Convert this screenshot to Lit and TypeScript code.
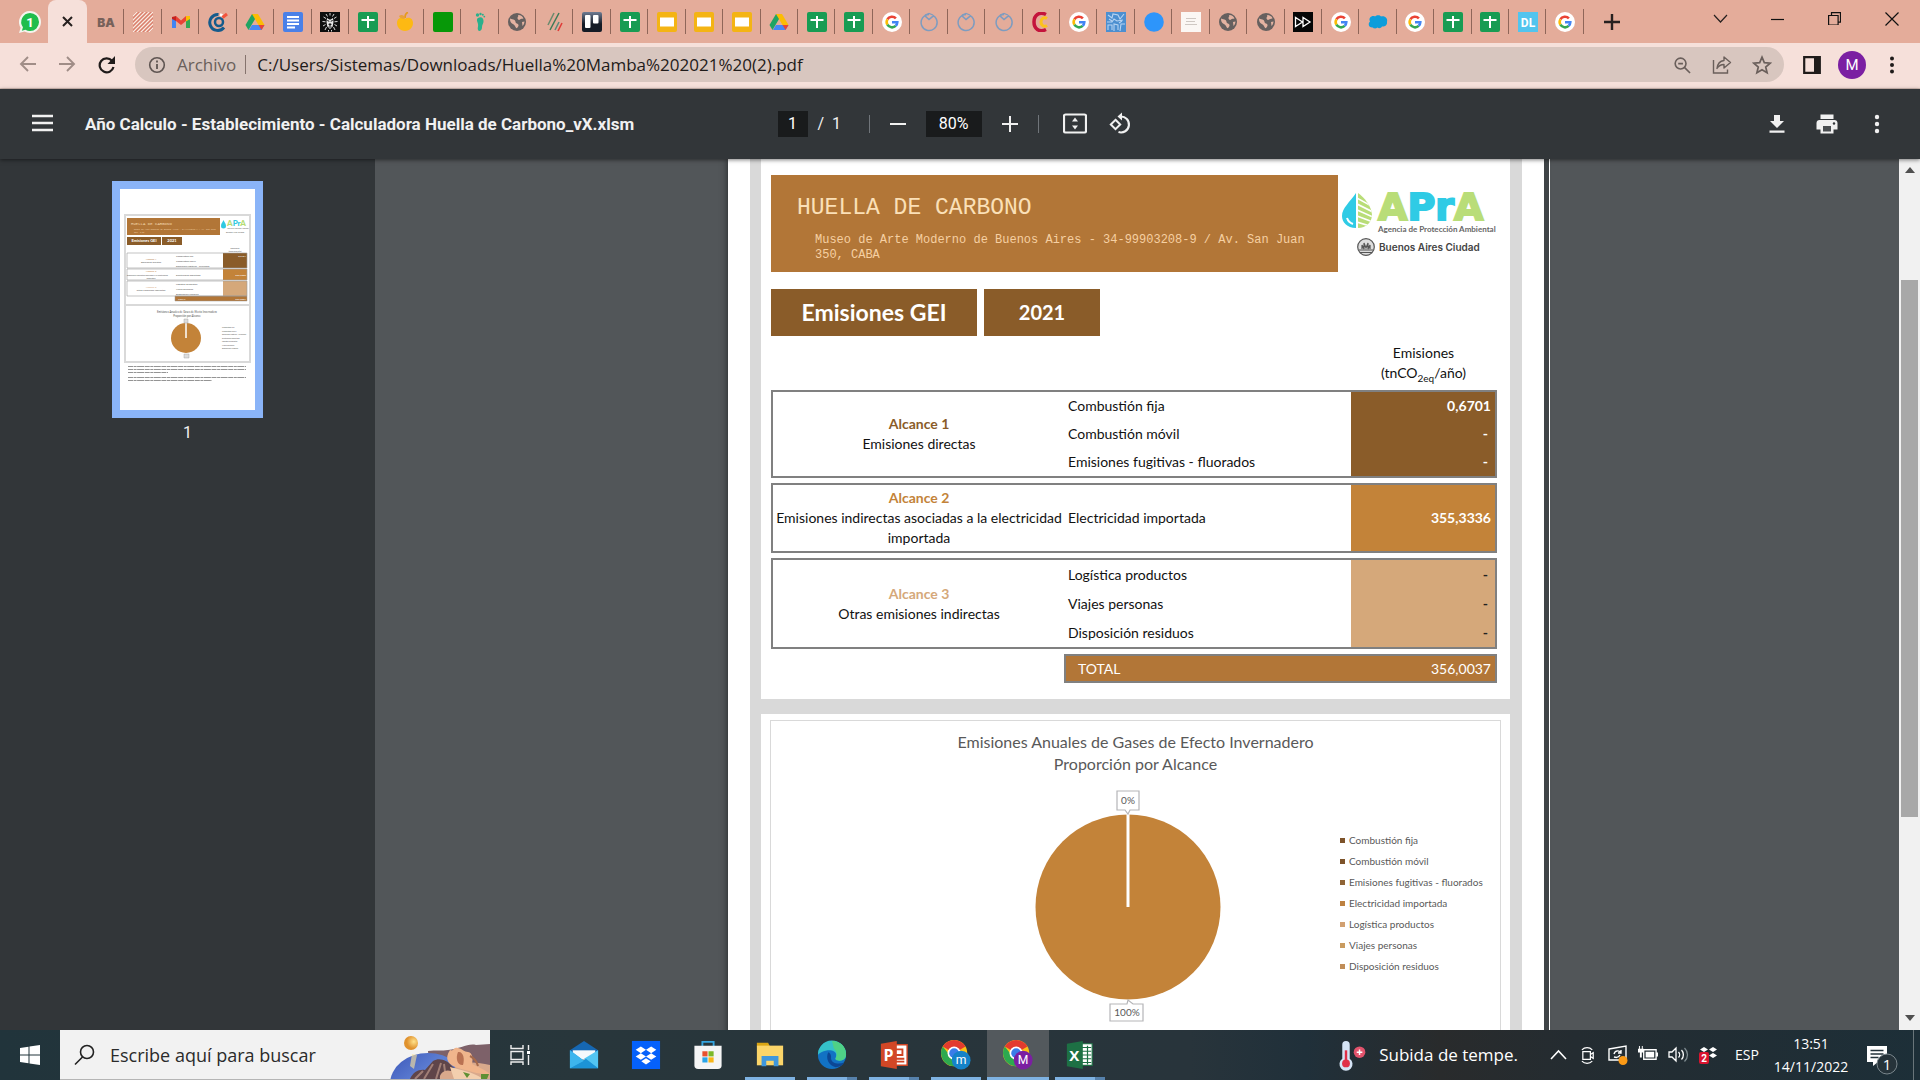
import { LitElement, html, svg, css, type TemplateResult } from "lit";
import { customElement } from "lit/decorators.js";
import { classMap } from "lit/directives/class-map.js";

/* ---------- Site icons, drawn on a 20 x 20 grid ---------- */

const sheets = svg`<rect width="20" height="20" rx="2" fill="#189c53"/><path d="M10 4v12M3.500 8h13" stroke="#fff" stroke-width="2" fill="none"/>`;
const slides = svg`<rect width="20" height="20" rx="2" fill="#f4b414"/><rect x="3" y="5.500" width="14" height="9" fill="#fff"/>`;
const drive = svg`<path d="M7 2h6l-6.500 11L3.500 18 .500 13z" fill="#1fa463"/><path d="M7 2h6l6.500 11h-6z" fill="#fbbc04"/><path d="M4 18l3-5h12.500l-3 5z" fill="#4688f4"/><path d="M13.500 13h6l-3 5z" fill="#ea4335"/>`;
const google = svg`<circle cx="10" cy="10" r="10" fill="#fff"/><g fill="none" stroke-width="2.600"><path d="M13.900 6.400A5.400 5.400 0 0 0 5.400 7.300" stroke="#ea4335"/><path d="M5.400 7.300a5.400 5.400 0 0 0 0 5.400" stroke="#fbbc05"/><path d="M5.400 12.700a5.400 5.400 0 0 0 8.300 1.200" stroke="#34a853"/><path d="M13.700 13.900A5.200 5.200 0 0 0 15.300 10.300H10" stroke="#4285f4"/></g>`;
const globe = svg`<circle cx="10" cy="10" r="9" fill="#66605f"/><path d="M3 6.500c2 1 3 .500 4.500 1.500S8 11 10 11.500s2 2.500.500 4c-1 1.300-1.500.500-2-.500-.600-1.700-1.500-2.500-3.500-3.500-1.200-.700-2-2-2-5zM11 3c2-.500 5 1.500 5.500 3.500-1.500.500-2.500 0-3.500 1s-2.500 0-2.500-1.500S12 4.500 11 3zM15 10l2.500-.500c-.200 2-1 3.500-2 4.500z" fill="#e4b3a2"/>`;
const bulb = svg`<path d="M10 2.500a8 8 0 1 0 4.500 1.300L10 7.500 5.700 3.600" fill="none" stroke="#7d9cc0" stroke-width="1.500"/><path d="M6 3l4-1.500L14 3" fill="none" stroke="#7d9cc0" stroke-width="1.300"/>`;

const favicons: Record<string, TemplateResult<2>> = {
  sheets, slides, drive, google, globe, bulb,
  gba: svg`<text x="10" y="15" text-anchor="middle" font-family="Inter, sans-serif" font-weight="900" font-size="12" fill="#77615a">BA</text>`,
  hatch: svg`<path d="M0 4l4-4M0 8l8-8M0 12L12 0M0 16L16 0M0 20L20 0M4 20L20 4M8 20L20 8M12 20l8-8M16 20l4-4" stroke="#fbe9e2" stroke-width="1"/><path d="M0 6l6-6M0 10L10 0M0 14L14 0M0 18L18 0M2 20L20 2M6 20L20 6M10 20l10-10M14 20l6-6" stroke="#d9705f" stroke-width=".8"/>`,
  gmail: svg`<path d="M1 5v11h4V8z" fill="#4285f4"/><path d="M15 8v8h4V5z" fill="#34a853"/><path d="M1 5l4-1v5L1 7z" fill="#c5221f"/><path d="M5 4l5 4.500L15 4v5l-5 4-5-4z" fill="#ea4335"/><path d="M15 4l4 0v3l-4 2.500z" fill="#fbbc04"/>`,
  compass: svg`<path d="M16 15.500A8 8 0 1 1 10.500 2.500" fill="none" stroke="#155b8c" stroke-width="3"/><circle cx="11" cy="10" r="4" fill="none" stroke="#155b8c" stroke-width="2.500"/><path d="M12 2.500l2.500 1" stroke="#fff" stroke-width="2.500"/><path d="M14.500 5.500L19 2" stroke="#f2543d" stroke-width="3"/>`,
  docs: svg`<rect width="20" height="20" rx="2" fill="#4a80e8"/><path d="M4 5h12M4 8.500h12M4 12h12M4 15.500h8" stroke="#fff" stroke-width="1.800"/>`,
  lion: svg`<rect width="20" height="20" fill="#0e0e0e"/><path d="M6 2l1.500 2.500M14 2l-1.500 2.500M10 1v2.500M3.500 5L6 6.500M16.500 5L14 6.500M2.500 9.500l3 .3M17.500 9.500l-3 .3M3 14l2.500-1.500M17 14l-2.500-1.500M5 18l1.500-3M15 18l-1.500-3M8.500 19.500V18M11.500 19.500V18" stroke="#eee" stroke-width=".9"/><path d="M7 6l2.300 1.500h1.400L13 6l.5 4-.8 4.500L10 17l-2.700-2.500L6.500 10z" fill="#e8e8e8"/><path d="M7.300 8.500l2 .8M12.700 8.500l-2 .8M8.800 12h2.400L10 13.600zM8.500 15h3" stroke="#0e0e0e" stroke-width="1" fill="#0e0e0e"/>`,
  apple: svg`<path d="M10 7c3-2.500 8-1 8 4 0 4-3 8-8 8s-8-4-8-8c0-5 5-6.500 8-4z" fill="#fdb913"/><path d="M10 6c0-3 1-5 3-5.500" stroke="#e79a1a" stroke-width="1.800" fill="none"/><path d="M4 4c3-2.500 6 0 6 2.500C7 7 5 6.500 4 4z" fill="#e8a23a"/>`,
  green: svg`<rect width="20" height="20" rx="2" fill="#079808"/>`,
  foot: svg`<path d="M8 6c3-2 6 0 5.500 4-.300 2-1.500 3-1.500 5.500 0 3-3 4.500-4 2.500-.800-2 .500-3.500 0-6S6 7.500 8 6z" fill="#2ab08c"/><g fill="#2ab08c"><circle cx="7.500" cy="3" r="1.700"/><circle cx="10.500" cy="2" r="1.200"/><circle cx="12.800" cy="2.800" r="1"/><circle cx="14.300" cy="4.600" r=".9"/></g>`,
  lines: svg`<path d="M3 13l6-12" stroke="#6a8a6e" stroke-width="1.500"/><path d="M5 18L14 1" stroke="#3f7a58" stroke-width="1.500"/><path d="M10 18l4-8" stroke="#5a8a7a" stroke-width="1.500"/><path d="M13 19l4-8" stroke="#e03a36" stroke-width="1.500"/>`,
  trello: svg`<defs><linearGradient id="tr" x1="0" y1="0" x2="0" y2="1"><stop offset="0" stop-color="#6f7c93"/><stop offset=".6" stop-color="#151b26"/></linearGradient></defs><rect width="20" height="20" rx="2" fill="url(#tr)"/><rect x="3" y="3" width="5.500" height="13" rx="1" fill="#fff"/><rect x="11" y="3" width="5.500" height="8.500" rx="1" fill="#fff"/>`,
  cee: svg`<path d="M15 2.500C8-1 3 3.500 3 10s5 11 12 7.500" fill="none" stroke="#c4143c" stroke-width="3.500"/><path d="M16 6.500c-3-2-6 0-6 3.500s3 5.500 6 3.500" fill="none" stroke="#fcc21b" stroke-width="3"/>`,
  scribble: svg`<rect width="20" height="20" fill="#4c8fd0"/><path d="M2 3l4 3 1-4 5 1 2 4 4-5M1 10h5l2-3 3 2 6-1M2 18v-5h4v5M8 19v-7l4 1v5M14 19l1-7h4M3 7l3 2M13 11l3-2" stroke="#b7d4f2" stroke-width="1.100" fill="none"/>`,
  dot: svg`<circle cx="10" cy="10" r="9.800" fill="#2d95fb"/>`,
  note: svg`<rect width="20" height="20" fill="#fbf7f4"/><path d="M5 6.500h10M5 9.500h9M4 12.500h12" stroke="#cfc8c3" stroke-width="1"/>`,
  forward: svg`<rect width="20" height="20" fill="#060606"/><path d="M2.500 5.500v9l7-4.500zM10 5.500v9l7-4.500z" fill="none" stroke="#fff" stroke-width="1.300"/>`,
  cloud: svg`<path d="M5 15.500C0 16 0 11 2 9.500 0 6 4 3 7 4.500c2-2 5-1.500 6 0 4-1 7 2 6 5.500.500 3.500-3 5-5 4.500-1 2-3.500 2-4.500 1-2 1.500-4 1-4.500 0z" fill="#0d9ddb"/>`,
  dl: svg`<rect width="20" height="20" fill="#52c4ee"/><text x="10" y="14.500" text-anchor="middle" font-family="Roboto, sans-serif" font-weight="700" font-size="12" fill="#fff">DL</text>`,
};

interface Tab { title: string; icon: string }

const tab = (title: string, icon: string): Tab => ({ title, icon });

const tabs: Tab[] = [
  tab("Buenos Aires", "gba"), tab("Sitio", "hatch"), tab("Gmail", "gmail"), tab("Calculadora", "compass"),
  tab("Drive", "drive"), tab("Documento", "docs"), tab("Museo", "lion"), tab("Planilla", "sheets"),
  tab("Manzana", "apple"), tab("Verde", "green"), tab("Huella", "foot"), tab("Web", "globe"),
  tab("Líneas", "lines"), tab("Trello", "trello"), tab("Planilla", "sheets"), tab("Presentación", "slides"),
  tab("Presentación", "slides"), tab("Presentación", "slides"), tab("Drive", "drive"), tab("Planilla", "sheets"),
  tab("Planilla", "sheets"), tab("Google", "google"), tab("Energía", "bulb"), tab("Energía", "bulb"),
  tab("Energía", "bulb"), tab("Cultura", "cee"), tab("Google", "google"), tab("Plano", "scribble"),
  tab("Punto", "dot"), tab("Nota", "note"), tab("Web", "globe"), tab("Web", "globe"),
  tab("Video", "forward"), tab("Google", "google"), tab("Nube", "cloud"), tab("Google", "google"),
  tab("Planilla", "sheets"), tab("Planilla", "sheets"), tab("DL", "dl"), tab("Google", "google"),
];

const icon = (body: TemplateResult<2>, size = 24, box = 24) =>
  html`<svg width=${size} height=${size} viewBox="0 0 ${box} ${box}" aria-hidden="true">${body}</svg>`;

/* ---------- Browser frame ---------- */

@customElement("browser-tabs")
class BrowserTabs extends LitElement {
  static styles = css`
    :host { display: block; background: #e4ac9a; }
    .strip { display: flex; height: 43px; align-items: stretch; }
    button { border: 0; padding: 0; background: none; color: #1d1b1b; display: flex; align-items: center; justify-content: center; }
    svg { display: block; }
    .pinned { width: 48px; padding-left: 12px; }
    .active { width: 39px; background: #f6e0da; border-radius: 8px 8px 0 0; }
    .tabs { display: flex; flex: 1; min-width: 0; }
    .tab { flex: 1; min-width: 0; position: relative; }
    .tab::after { content: ""; position: absolute; right: 0; top: 9px; width: 1px; height: 25px; background: #8f6659; }
    .new { width: 56px; }
    .controls { display: flex; margin-left: 52px; }
    .control { width: 57px; padding-bottom: 6px; }
  `;
  render() {
    return html`<nav class="strip" aria-label="Pestañas">
      <button class="pinned" aria-label="WhatsApp">${icon(svg`<path d="M10 0a10 10 0 0 1 0 20 10 10 0 0 1-5-1.300L0 20l1.500-4.800A10 10 0 0 1 10 0z" fill="#f4f4ee"/><path d="M10 1.800a8.200 8.200 0 0 1 0 16.400 8 8 0 0 1-4.200-1.200L2.600 18l1-3.200A8.200 8.200 0 0 1 10 1.800z" fill="#1fbd4c"/><text x="10" y="14.500" text-anchor="middle" font-family="Roboto, sans-serif" font-weight="700" font-size="12" fill="#fff">1</text>`, 22, 20)}</button>
      <button class="active" aria-label="Cerrar pestaña">${icon(svg`<path d="M1 1l9 9M10 1l-9 9" stroke="#26201f" stroke-width="2"/>`, 11, 11)}</button>
      <div class="tabs">${tabs.map((t) => html`<button class="tab" aria-label=${t.title}>${icon(favicons[t.icon], 20, 20)}</button>`)}</div>
      <button class="new" aria-label="Nueva pestaña">${icon(svg`<path d="M8 0v16M0 8h16" stroke="#26201f" stroke-width="2.400"/>`, 16, 16)}</button>
      <div class="controls">
        <button class="control" aria-label="Buscar pestañas">${icon(svg`<path d="M1 4l6.500 7L14 4" fill="none" stroke="#26201f" stroke-width="1.200"/>`, 15, 15)}</button>
        <button class="control" aria-label="Minimizar">${icon(svg`<path d="M0 7.500h13" stroke="#111" stroke-width="1.200"/>`, 14, 14)}</button>
        <button class="control" aria-label="Restaurar">${icon(svg`<path d="M.600 3.500h9.500V13H.600zM3.500 3.500V.700h9v9.500h-2.400" fill="none" stroke="#111" stroke-width="1.200"/>`, 13, 13)}</button>
        <button class="control" aria-label="Cerrar">${icon(svg`<path d="M.500.500l13 13M13.500.500l-13 13" stroke="#111" stroke-width="1.200"/>`, 14, 14)}</button>
      </div>
    </nav>`;
  }
}

@customElement("address-bar")
class AddressBar extends LitElement {
  static styles = css`
    :host { display: block; background: #f6e0da; }
    .bar { display: flex; align-items: center; height: 46px; padding: 0 8px 2px 7px; box-sizing: border-box; border-bottom: 1px solid #d8c0b8; font: 17px/24px "Open Sans", sans-serif; }
    button { border: 0; padding: 0; background: none; display: flex; align-items: center; justify-content: center; width: 40px; height: 36px; }
    .pill { flex: 1; display: flex; align-items: center; height: 35px; margin-left: 8px; margin-right: 8px; padding: 0 2px 0 12px; border-radius: 18px; background: #d8c6bf; color: #6a5f5b; }
    .scheme { margin-left: 10px; }
    .divider { width: 1px; height: 19px; margin: 0 11px 0 9px; background: #85736d; }
    .url { flex: 1; min-width: 0; border: 0; padding: 0; background: none; outline: 0; color: #1f1b1a; font: 17px/24px "Open Sans", sans-serif; }
    .avatar { width: 28px; height: 28px; border-radius: 50%; background: #7b1fa2; color: #fff; font: 15px/28px Roboto, sans-serif; margin: 0 6px; }
  `;
  render() {
    return html`<div class="bar">
      <button aria-label="Atrás">${icon(svg`<path d="M17 8H2M9 1L2 8l7 7" fill="none" stroke="#a08d87" stroke-width="1.900"/>`, 17, 17)}</button>
      <button aria-label="Adelante">${icon(svg`<path d="M0 8h15M8 1l7 7-7 7" fill="none" stroke="#a08d87" stroke-width="1.900"/>`, 17, 17)}</button>
      <button aria-label="Recargar">${icon(svg`<path d="M15.500 11a7 7 0 1 1-1.500-6.300" fill="none" stroke="#1f1b1a" stroke-width="2.200"/><path d="M17 0v8H9.500z" fill="#1f1b1a"/>`, 18, 18)}</button>
      <div class="pill">
        ${icon(svg`<circle cx="10" cy="10" r="7.300" fill="none" stroke="#5f5552" stroke-width="1.600"/><path d="M10 9v5M10 5.600v1.900" stroke="#5f5552" stroke-width="1.800"/>`, 20, 20)}
        <label class="scheme" for="url">Archivo</label><span class="divider"></span>
        <input class="url" id="url" value="C:/Users/Sistemas/Downloads/Huella%20Mamba%202021%20(2).pdf" />
        <button aria-label="Zoom">${icon(svg`<circle cx="8" cy="8" r="5.700" fill="none" stroke="#6a5f5b" stroke-width="1.700"/><path d="M12.300 12.300L18 18M5.500 8h5" stroke="#6a5f5b" stroke-width="1.700"/>`, 18, 19)}</button>
        <button aria-label="Compartir">${icon(svg`<path d="M1.500 5v13h14v-3.500" fill="none" stroke="#6a5f5b" stroke-width="1.400"/><path d="M12 2l6.500 5.500L12 13v-3.500c-3.500 0-5.500 1.500-7 4C5.500 9 7.500 6 12 5.500z" fill="none" stroke="#6a5f5b" stroke-width="1.400" stroke-linejoin="round"/>`, 20, 20)}</button>
        <button aria-label="Marcador">${icon(svg`<path d="M10 2.200l2.300 5.400 5.900.500-4.500 3.900 1.400 5.700L10 14.700l-5.100 3 1.400-5.700-4.500-3.900 5.900-.500z" fill="none" stroke="#6a5f5b" stroke-width="1.700"/>`, 20, 20)}</button>
      </div>
      <button aria-label="Panel lateral">${icon(svg`<path d="M1.200 1.200h15.600v15.600H1.200z" fill="none" stroke="#1f1b1a" stroke-width="2.200"/><path d="M11 1h6v16h-6z" fill="#1f1b1a"/>`, 18, 18)}</button>
      <button class="avatar" aria-label="Perfil">M</button>
      <button aria-label="Menú">${icon(svg`<g fill="#1f1b1a"><circle cx="9" cy="2.500" r="2"/><circle cx="9" cy="9" r="2"/><circle cx="9" cy="15.500" r="2"/></g>`, 18, 18)}</button>
    </div>`;
  }
}

/* ---------- PDF viewer ---------- */

@customElement("pdf-toolbar")
class PdfToolbar extends LitElement {
  static styles = css`
    :host { display: block; background: #323639; color: #f1f1f1; box-shadow: 0 1px 4px rgba(0, 0, 0, .5); z-index: 1; }
    .bar { display: grid; grid-template-columns: 1fr auto 1fr; align-items: center; height: 70px; font: 16px/24px Roboto, sans-serif; }
    .side, .middle { display: flex; align-items: center; }
    .side { min-width: 0; }
    .end { justify-content: flex-end; padding-right: 18px; }
    button { border: 0; padding: 0; background: none; display: flex; align-items: center; justify-content: center; width: 50px; height: 40px; }
    .menu { margin-left: 17px; }
    h1 { margin: 0 0 0 18px; font-size: 17px; line-height: 24px; font-weight: 700; white-space: nowrap; }
    input { border: 0; padding: 0; height: 26px; background: #191b1c; color: #fff; text-align: center; font: 16px/26px Roboto, sans-serif; }
    .page { width: 30px; }
    .zoom { width: 56px; }
    .count { width: 40px; margin-left: 6px; }
    .rule { width: 1px; height: 18px; background: #70757a; }
    .spaced { margin-left: 15px; }
    .step { width: 56px; }
    .tool { width: 45px; }
    .first { margin-left: 14px; }
  `;
  render() {
    return html`<header class="bar">
      <div class="side">
        <button class="menu" aria-label="Menú">${icon(svg`<path d="M0 2h21M0 9h21M0 16h21" stroke="#f1f1f1" stroke-width="2.500"/>`, 21, 21)}</button>
        <h1>Año Calculo - Establecimiento - Calculadora Huella de Carbono_vX.xlsm</h1>
      </div>
      <div class="middle">
        <input class="page" aria-label="Página" value="1" /><span class="count">&nbsp;/ &nbsp;1</span><span class="rule spaced"></span>
        <button class="step" aria-label="Alejar">${icon(svg`<path d="M0 8h16" stroke="#f1f1f1" stroke-width="2"/>`, 16, 16)}</button>
        <input class="zoom" aria-label="Nivel de zoom" value="80%" />
        <button class="step" aria-label="Acercar">${icon(svg`<path d="M0 8h16M8 0v16" stroke="#f1f1f1" stroke-width="2"/>`, 16, 16)}</button>
        <span class="rule"></span>
        <button class="tool first" aria-label="Ajustar a la página">${icon(svg`<rect x="1" y="2.500" width="22" height="18" rx="1.500" fill="none" stroke="#f1f1f1" stroke-width="2.200"/><path d="M12 5.500l3 4H9zM12 17.500l3-4H9z" fill="#f1f1f1"/>`)}</button>
        <button class="tool" aria-label="Girar">${icon(svg`<path d="M12.500 4.500a8 8 0 1 1-2 15.600" fill="none" stroke="#f1f1f1" stroke-width="2.100"/><path d="M14 .500v8L9.500 4.500z" fill="#f1f1f1"/><path d="M7.500 7.800l4.700 4.700-4.700 4.700-4.700-4.700z" fill="none" stroke="#f1f1f1" stroke-width="2"/>`)}</button>
      </div>
      <div class="side end">
        <button aria-label="Descargar">${icon(svg`<path d="M9 3h6v6h4l-7 7-7-7h4zM4.500 18.500h15v2.300h-15z" fill="#f1f1f1"/>`)}</button>
        <button aria-label="Imprimir">${icon(svg`<path d="M5.500 2.500h13V7h-13zM4.500 8h15c1.700 0 3 1.300 3 3v6.500h-4v4h-13v-4h-4V11c0-1.700 1.300-3 3-3z" fill="#f1f1f1"/><path d="M8 14h8v5.500H8z" fill="#4a4e51"/><circle cx="19" cy="11.500" r="1.200" fill="#323639"/>`)}</button>
        <button aria-label="Más">${icon(svg`<g fill="#f1f1f1"><circle cx="12" cy="5" r="2.200"/><circle cx="12" cy="12" r="2.200"/><circle cx="12" cy="19" r="2.200"/></g>`)}</button>
      </div>
    </header>`;
  }
}

@customElement("page-thumbnails")
class PageThumbnails extends LitElement {
  static styles = css`
    :host { display: block; background: #323639; }
    .list { display: flex; flex-direction: column; align-items: center; padding: 22px 0 0; }
    button { display: block; border: 8px solid #8ab4f8; padding: 0; background: #fff; }
    svg { display: block; }
    .number { font: 16px/30px Roboto, sans-serif; color: #f1f1f1; }
  `;
  render() {
    const t = (x: number, y: number, size: number, fill: string, text: string, anchor = "start") =>
      svg`<text x=${x} y=${y} font-size=${size} fill=${fill} text-anchor=${anchor}>${text}</text>`;
    const dark = "#555";
    return html`<div class="list">
      <button aria-label="Página 1">
        <svg width="135" height="221" viewBox="0 0 135 221" font-family="Lato, sans-serif" aria-hidden="true">
          <path d="M5 26h125v147H5zM5 116h125" fill="none" stroke="#d9d9d9" stroke-width="2"/>
          <path d="M7 29h93v17H7z" fill="#b27637"/>
          <path d="M7 48h34v8H7zM42 48h20v8H42z" fill="#8a5c29"/>
          <path d="M103 64h24v15h-24z" fill="#8a5c29"/><path d="M103 80h24v11h-24z" fill="#c38339"/><path d="M103 92h24v15h-24z" fill="#d5a87a"/>
          <path d="M55 107h72v5H55z" fill="#b27637" stroke="#999" stroke-width=".5"/>
          <path d="M7 64h120v15H7zM7 80h120v11H7zM7 92h120v15H7z" fill="none" stroke="#9a9a9a" stroke-width=".6"/>
          <path d="M101 37c0-3 2-4 2.500-6 .500 2 2.500 3 2.500 6a2.500 2.500 0 0 1-5 0z" fill="#2fc9e2"/>
          <text x="107" y="37" font-size="8" font-weight="900" fill="#b5dc74">A<tspan fill="#2fc9e2">Pr</tspan>A</text>
          ${t(107, 40, 1.5, dark, "Agencia de Protección Ambiental")}
          ${t(106, 44, 2, dark, "Buenos Aires Ciudad")}
          <g font-family="Liberation Mono, monospace">${t(11, 36, 4, "#f4d9b0", "HUELLA DE CARBONO")}${t(14, 41, 2, "#f4d9b0", "Museo de Arte Moderno de Buenos Aires - 34-99903208-9 / Av. San Juan")}${t(14, 44, 2, "#f4d9b0", "350, CABA")}</g>
          <g font-weight="700">${t(24, 53, 4, "#fff", "Emisiones GEI", "middle")}${t(52, 53, 4, "#fff", "2021", "middle")}</g>
          ${t(115, 60, 2, dark, "Emisiones", "middle")}${t(115, 63, 2, dark, "(tnCO2eq/año)", "middle")}
          ${t(31, 71, 2.5, "#b27637", "Alcance 1", "middle")}${t(31, 74, 2.5, dark, "Emisiones directas", "middle")}
          ${t(56, 68, 2.5, dark, "Combustión fija")}${t(56, 73, 2.5, dark, "Combustión móvil")}${t(56, 78, 2.5, dark, "Emisiones fugitivas - fluorados")}
          ${t(31, 83, 2.5, "#c38339", "Alcance 2", "middle")}${t(7, 87, 2, dark, "Emisiones indirectas asociadas a la electricidad")}${t(31, 90, 2, dark, "importada", "middle")}${t(56, 87, 2.5, dark, "Electricidad importada")}
          ${t(31, 99, 2.5, "#d5a87a", "Alcance 3", "middle")}${t(31, 102, 2.5, dark, "Otras emisiones indirectas", "middle")}
          ${t(56, 96, 2.5, dark, "Logística productos")}${t(56, 101, 2.5, dark, "Viajes personas")}${t(56, 106, 2.5, dark, "Disposición residuos")}
          ${t(58, 111, 2.5, "#fff", "TOTAL")}${t(126, 68, 2.5, "#fff", "0,6701", "end")}${t(126, 87, 2.5, "#fff", "355,3336", "end")}${t(126, 111, 2.5, "#fff", "356,0037", "end")}
          ${t(67, 124, 2.7, dark, "Emisiones Anuales de Gases de Efecto Invernadero", "middle")}${t(67, 128, 2.7, dark, "Proporción por Alcance", "middle")}
          <circle cx="66" cy="149" r="15" fill="#c38339"/><path d="M66 134v15" stroke="#fff" stroke-width="1.500"/>
          <path d="M64 130h4v4h-4zM64 165h5v4h-5z" fill="#ddd" stroke="#999" stroke-width=".4"/>
          ${["Combustión fija", "Combustión móvil", "Emisiones fugitivas - fluorados", "Electricidad importada", "Logística productos", "Viajes personas", "Disposición residuos"].map((s, i) => t(102, 139 + i * 3.5, 1.8, dark, s))}
          <path d="M8 177.500h118M8 180.500h118M8 183.500h40M8 188.500h118M8 191.500h84" stroke="#888" stroke-width=".9" stroke-dasharray="5 .6 3 .5 7 .6"/>
        </svg>
      </button>
      <span class="number">1</span>
    </div>`;
  }
}

interface Source { name: string; value: string; color: string }
interface Scope { id: number; title: string; detail: string; sources: Source[] }

const scopes: Scope[] = [
  { id: 1, title: "Alcance 1", detail: "Emisiones directas", sources: [
    { name: "Combustión fija", value: "0,6701", color: "#7d532a" },
    { name: "Combustión móvil", value: "-", color: "#7d532a" },
    { name: "Emisiones fugitivas - fluorados", value: "-", color: "#8f6436" } ] },
  { id: 2, title: "Alcance 2", detail: "Emisiones indirectas asociadas a la electricidad importada", sources: [
    { name: "Electricidad importada", value: "355,3336", color: "#bd8140" } ] },
  { id: 3, title: "Alcance 3", detail: "Otras emisiones indirectas", sources: [
    { name: "Logística productos", value: "-", color: "#d1a071" },
    { name: "Viajes personas", value: "-", color: "#c99b5f" },
    { name: "Disposición residuos", value: "-", color: "#c08d58" } ] },
];

@customElement("emissions-report")
class EmissionsReport extends LitElement {
  static styles = css`
    :host { display: block; width: 816px; box-sizing: border-box; padding: 0 22px; background: #fff; color: #111; font: 14px/20px Lato, sans-serif; box-shadow: 5px 0 0 #3f4447, 6px 0 0 #fff, -1px 0 6px #2c2f31; }
    .frame { border: solid #d9d9d9; border-width: 0 12px 0 11px; }
    .summary { padding: 16px 13px 16px 10px; border-bottom: 15px solid #d9d9d9; }
    .top { display: grid; grid-template-columns: 567px 1fr; }
    .banner { background: #b27637; color: #fbe0b8; padding: 21px 10px 9px 26px; font-family: "Liberation Mono", monospace; }
    h2 { margin: 0; font-size: 23px; line-height: 24px; font-weight: 400; }
    .museum { margin: 13px 0 0 18px; font-size: 12px; line-height: 15px; color: #f6d0a2; }
    .logo { padding: 14px 0 0 4px; }
    .apra { display: grid; grid-template-columns: 30px 1fr; column-gap: 6px; }
    .word { font: 700 38px/36px "DejaVu Sans", sans-serif; color: #b9dd78; -webkit-text-stroke: 2px currentColor; }
    .word span { color: #2fcbe5; }
    .tag { font: 700 8px/9px Lato, sans-serif; color: #666; white-space: nowrap; }
    .city { display: flex; align-items: center; gap: 4px; margin: 3px 0 0 15px; font: 600 10px/20px Inter, sans-serif; color: #444; white-space: nowrap; }
    .chips { display: flex; gap: 7px; margin-top: 17px; font-size: 23px; line-height: 47px; font-weight: 700; color: #fff; text-align: center; }
    .chip { width: 206px; background: #8a5c29; }
    .year { width: 116px; font-size: 20px; }
    table { width: 100%; margin-top: 5px; border-collapse: collapse; table-layout: fixed; }
    .c1 { width: 293px; }
    .c3 { width: 145px; }
    th, td { padding: 0; font-weight: 400; }
    .unit { height: 40px; padding: 2px 0 7px; text-align: center; vertical-align: top; }
    sub { font-size: 10px; line-height: 0; }
    .scope { border: 2px solid #808080; }
    .scope th { text-align: center; line-height: 20px; }
    .scope td { height: 28px; padding-left: 3px; }
    .scope2 td { height: 66px; }
    .scope3 td { height: 29px; }
    .scope td.value, .total td.value { text-align: right; padding-right: 4px; font-weight: 700; color: #fff; }
    .scope td.none { padding-right: 7px; }
    .scope1 .value { background: #8a5c29; }
    .scope2 .value { background: #c38339; }
    .scope3 td.value { background: #d5a87a; color: #222; }
    .scope1 b { color: #8a5c29; }
    .scope2 b { color: #c38339; }
    .scope3 b { color: #d5a87a; }
    .gap td { height: 5px; line-height: 5px; }
    .total th, .total td.value { height: 25px; border: 2px solid #808080; background: #b27637; color: #fff; font-weight: 400; }
    .total th { text-align: left; padding-left: 12px; border-right: 0; }
    .total td.value { border-left: 0; font-weight: 400; }
    .blank { background: #fff; }
    .chartpane { padding: 6px 9px; }
    .chart { margin: 0; min-height: 380px; border: 1px solid #d9d9d9; padding-top: 10px; color: #595959; }
    figcaption { text-align: center; font-size: 16px; line-height: 22px; }
    .plot { display: flex; align-items: flex-start; margin-top: 15px; padding-left: 264px; }
    .pie { flex: none; }
    ul { list-style: none; margin: 40px 0 0 119px; padding: 0; font-size: 10px; line-height: 21px; white-space: nowrap; }
    li { display: flex; align-items: center; gap: 4px; }
    .key { width: 5px; height: 5px; }
  `;
  render() {
    return html`<article class="frame">
      <section class="summary">
        <div class="top">
          <div class="banner"><h2>HUELLA DE CARBONO</h2>
            <p class="museum">Museo de Arte Moderno de Buenos Aires - 34-99903208-9 / Av. San Juan 350, CABA</p></div>
          <div class="logo">
            <div class="apra">
              <svg width="30" height="42" viewBox="0 -2 30 42" aria-hidden="true">
                <path d="M14 2v35C5 37 0 31 0 25 0 17 8 11 14 2z" fill="#2fcbe5"/>
                <path d="M5 27c1 3 3 5 6 6" fill="none" stroke="#fff" stroke-width="2"/>
                <clipPath id="leaf"><path d="M16 2c6 4 14 14 14 22 0 7-6 13-14 13z"/></clipPath>
                <g clip-path="url(#leaf)"><path d="M16 2h15v36H16z" fill="#b9dd78"/><path d="M15 7l16 9M15 13l16 8M15 19l16 7M15 25l16 6M15 31l16 5" stroke="#fff" stroke-width="1.600"/></g>
              </svg>
              <div><div class="word">A<span>Pr</span>A</div><div class="tag">Agencia de Protección Ambiental</div></div>
            </div>
            <div class="city">
              <svg width="18" height="18" viewBox="0 0 18 18" aria-hidden="true"><circle cx="9" cy="9" r="8.300" fill="#ddd" stroke="#555" stroke-width="1.200"/><path d="M2 12h14M3 14.500h12M5 11V7l2 4V5l2 5 2-5v6l2-4v4" stroke="#555" stroke-width="1.200" fill="none"/></svg>
              Buenos Aires Ciudad</div>
          </div>
        </div>
        <div class="chips"><div class="chip">Emisiones GEI</div><div class="chip year">2021</div></div>
        <table>
          <colgroup><col class="c1" /><col /><col class="c3" /></colgroup>
          <thead><tr><td colspan="2"></td><th class="unit" scope="col">Emisiones<br />(tnCO<sub>2eq</sub>/año)</th></tr></thead>
          ${scopes.map((s) => html`
            <tbody class=${classMap({ scope: true, [`scope${s.id}`]: true })}>
              ${s.sources.map((r, i) => html`<tr>
                ${i === 0 ? html`<th scope="rowgroup" rowspan=${s.sources.length}><b>${s.title}</b><br />${s.detail}</th>` : ""}
                <td>${r.name}</td><td class=${classMap({ value: true, none: r.value === "-" })}>${r.value}</td></tr>`)}
            </tbody>
            <tbody class="gap"><tr><td colspan="3"></td></tr></tbody>`)}
          <tfoot class="total"><tr><td class="blank"></td><th scope="row">TOTAL</th><td class="value">356,0037</td></tr></tfoot>
        </table>
      </section>
      <section class="chartpane">
        <figure class="chart">
          <figcaption>Emisiones Anuales de Gases de Efecto Invernadero<br />Proporción por Alcance</figcaption>
          <div class="plot">
            <svg class="pie" width="186" height="232" viewBox="0 0 186 232" role="img" aria-label="Electricidad importada 100%" font-family="Lato, sans-serif" font-size="10" fill="#595959" text-anchor="middle">
              <circle cx="93" cy="117" r="92.500" fill="#c38339"/>
              <path d="M93 24v93" stroke="#fff" stroke-width="3"/>
              <path d="M82 1h22v19H95l-2 4-3-4h-8z" fill="#fff" stroke="#b5b5b8" stroke-width="1.200"/>
              <path d="M75 214h17l1-4 5 4h10v17H75z" fill="#fff" stroke="#b5b5b8" stroke-width="1.200"/>
              <text x="93" y="14">0%</text><text x="92" y="226">100%</text>
            </svg>
            <ul>${scopes.flatMap((s) => s.sources).map((r) => html`<li><span class="key" style="background:${r.color}"></span>${r.name}</li>`)}</ul>
          </div>
        </figure>
      </section>
    </article>`;
  }
}

@customElement("scroll-rail")
class ScrollRail extends LitElement {
  static styles = css`
    :host { display: flex; flex-direction: column; align-items: center; justify-content: space-between; width: 21px; background: #f1f1f1; }
    svg { display: block; flex: none; margin: 7px 0; }
    .track { flex: 1; width: 17px; padding-top: 97px; }
    .thumb { height: 74%; background: #a8a8a8; }
  `;
  render() {
    return html`${icon(svg`<path d="M0 7l5-6 5 6z" fill="#505050"/>`, 10, 10)}
      <div class="track"><div class="thumb"></div></div>
      ${icon(svg`<path d="M0 2l5 6 5-6z" fill="#505050"/>`, 10, 10)}`;
  }
}

/* ---------- Windows taskbar ---------- */

const chrome = (letter: string, badge: string) => svg`
  <circle cx="14" cy="14" r="14" fill="#fbc116"/><path d="M14 14L1.900 7A14 14 0 0 1 26.100 7z" fill="#e33b2e"/>
  <path d="M1.900 7l8 10L14 28A14 14 0 0 1 1.900 7z" fill="#2da94f"/><path d="M14 28l6-11-6-3-5 4z" fill="#2da94f"/>
  <circle cx="14" cy="14" r="7" fill="#fff"/><circle cx="14" cy="14" r="5.200" fill="#3a7de8"/>
  <circle cx="21.500" cy="21.500" r="10" fill=${badge}/><text x="21.500" y="26" text-anchor="middle" font-family="Roboto, sans-serif" font-size="13" fill="#fff">${letter}</text>`;

interface App { name: string; body: TemplateResult<2>; running?: boolean; stacked?: boolean; current?: boolean }

const apps: App[] = [
  { name: "Correo", body: svg`<path d="M1 11L16 1l15 10v6H1z" fill="#1667b2"/><path d="M4 11h24v10H4z" fill="#f4f9fc"/><path d="M1 11l15 11L31 11v19H1z" fill="#2fa8e4"/><path d="M16 20L31 11v19z" fill="#52c5f2"/><path d="M16 21.500l2-1.500L31 30H1z" fill="#1c93d6"/><path d="M1 11l15 11-15 8z" fill="#3db5ee"/>` },
  { name: "Dropbox", body: svg`<path d="M1 1h30v30H1z" fill="#0561fb"/><path d="M10.500 7l5.500 3.500-5.500 3.500L5 10.500zM21.500 7l5.500 3.500-5.500 3.500-5.500-3.500zM10.500 14l5.500 3.500-5.500 3.500L5 17.500zM21.500 14l5.500 3.500-5.500 3.500-5.500-3.500zM16 19.500l5 3.200-5 3.300-5-3.300z" fill="#fff"/>` },
  { name: "Store", body: svg`<path d="M10 7V2h12v5" fill="none" stroke="#35a5e0" stroke-width="2"/><path d="M1.500 6h29v21a4 4 0 0 1-4 4h-21a4 4 0 0 1-4-4z" fill="#f5f5f5"/><path d="M10 12h5.500v5.500H10z" fill="#e8502e"/><path d="M16.500 12H22v5.500h-5.500z" fill="#7cb928"/><path d="M10 18.500h5.500V24H10z" fill="#2aa4e8"/><path d="M16.500 18.500H22V24h-5.500z" fill="#f8b618"/>` },
  { name: "Explorador", running: true, body: svg`<path d="M2 3h12l2 4H2z" fill="#d9a514"/><path d="M2 6h28v21H2z" fill="#fbd569"/><path d="M7 28V17h18v11h-5v-6h-8v6z" fill="#3f97dc"/>` },
  { name: "Edge", running: true, stacked: true, body: svg`<circle cx="16" cy="16" r="15" fill="#1272c4"/><path d="M1 16A15 15 0 0 1 31 15c0 5-3 7-7 7-3 0-5-1-4-3 2-4-1-8-6-8-7 0-12 3-13 5z" fill="#35c1c9"/><path d="M16 1c9 0 15 6 15 14 0 5-3 7-7 7-3 0-5-1-4-3 2-3 1-7-2-10z" fill="#4fd186"/><path d="M12 13c-3 6 0 14 8 16 4 0 7-2 9-5-7 3-15 0-14-6 0-3-1-4-3-5z" fill="#0c4795"/>` },
  { name: "PowerPoint", running: true, stacked: true, body: svg`<path d="M16 5h14v22H16z" fill="#fff" stroke="#d04423" stroke-width="1.500"/><path d="M18 10h7v6h-7M18 20h9M18 23h9" stroke="#d04423" stroke-width="2" fill="none"/><path d="M2 4l17-3v30L2 28z" fill="#d24726"/><text x="10" y="22" text-anchor="middle" font-family="Open Sans, sans-serif" font-weight="700" font-size="17" fill="#fff">P</text>` },
  { name: "Chrome m", running: true, body: chrome("m", "#1582c8") },
  { name: "Chrome M", running: true, current: true, body: chrome("M", "#7b1fa2") },
  { name: "Excel", running: true, stacked: true, body: svg`<path d="M16 4h13v23H16z" fill="#fff" stroke="#1d7044" stroke-width="1.200"/><path d="M18 8h10M18 12h10M18 16h10M18 20h10M18 24h10M24 6v20" stroke="#1d7044" stroke-width="1.300"/><path d="M2 4l17-3v30L2 28z" fill="#1d7044"/><text x="10" y="22" text-anchor="middle" font-family="Open Sans, sans-serif" font-weight="700" font-size="16" fill="#fff">X</text>` },
];

@customElement("task-bar")
class TaskBar extends LitElement {
  static styles = css`
    :host { display: block; background: linear-gradient(90deg, #21343b, #28363b 30%, #28343b 62%, #20303a 68%, #292b2c 75%, #242c31 82%, #1d2f38); color: #fff; z-index: 1; }
    .bar { display: flex; height: 50px; font: 17px/24px "Open Sans", sans-serif; }
    button { border: 0; padding: 0; background: none; color: inherit; font: inherit; display: flex; align-items: center; justify-content: center; }
    svg { display: block; overflow: visible; }
    .start { width: 60px; }
    .search { display: flex; align-items: center; width: 430px; background: #f2f2f2; border-bottom: 1px solid #b5b5b5; box-sizing: border-box; }
    .lens { display: flex; margin: 0 14px 0 14px; }
    .search input { flex: 1; min-width: 0; border: 0; padding: 0; background: none; outline: 0; color: #222; font: 18px/24px "Open Sans", sans-serif; }
    .search input::placeholder { color: #2b2b2b; opacity: 1; }
    .view { width: 63px; padding-right: 4px; }
    .app { width: 62px; position: relative; }
    .current { background: #53595d; }
    .running::after { content: ""; position: absolute; bottom: 0; left: 6px; right: 6px; height: 3px; background: #7eb2e2; }
    .stacked::after { background: linear-gradient(90deg, #7eb2e2 80%, #5681ab 80%); }
    .current::after { left: 0; right: 0; }
    .tray { display: flex; margin-left: auto; }
    .weather { gap: 12px; padding-right: 25px; }
    .tray .small { width: 30px; }
    .lang { width: 48px; font-size: 14px; }
    .clock { width: 80px; flex-direction: column; font-size: 14px; line-height: 23px; }
    .notes { width: 62px; padding-right: 8px; }
    .peek { width: 6px; border-left: 1px solid #69757a; }
  `;
  render() {
    return html`<footer class="bar">
      <button class="start" aria-label="Inicio">${icon(svg`<path d="M0 3l8.500-1.200V9.500H0zM9.500 1.600L20 0v9.500H9.500zM0 10.500h8.500v7.700L0 17zM9.500 10.500H20V20l-10.500-1.600z" fill="#fff"/>`, 20, 20)}</button>
      <div class="search">
        <label class="lens" for="find">${icon(svg`<circle cx="13" cy="8" r="6.500" fill="none" stroke="#222" stroke-width="1.600"/><path d="M8.500 13L1 20.500" stroke="#222" stroke-width="1.600"/>`, 22, 22)}</label>
        <input id="find" placeholder="Escribe aquí para buscar" />
        <svg width="100" height="49" viewBox="0 0 100 49" aria-hidden="true">
          <defs><radialGradient id="sun" cx=".7" cy=".4"><stop offset="0" stop-color="#ffe28a"/><stop offset="1" stop-color="#e0922e"/></radialGradient>
          <linearGradient id="lake" x1="0" y1="0" x2="1" y2="1"><stop offset="0" stop-color="#3b56b8"/><stop offset=".4" stop-color="#5f80d4"/><stop offset="1" stop-color="#2f3f8e"/></linearGradient>
          <clipPath id="art"><path d="M0 0h100v49H0z"/></clipPath></defs>
          <g clip-path="url(#art)"><circle cx="21" cy="13" r="7" fill="url(#sun)"/>
          <path d="M38 21c8-1 14 0 20-1 12-1 20-7 28-5l14-1v35H40z" fill="#7d6169"/><ellipse cx="38" cy="54" rx="38" ry="31" fill="url(#lake)"/>
          <path d="M22 24l5 1-3 14-4-3z" fill="#ffe69b" opacity=".6"/>
          <path d="M20 49c3-7 9-10 15-9l8-9c7-4 14 0 18 4l14 14z" fill="#5f4549"/><path d="M25 49l8-8M34 49l9-15M46 49l5-16M56 49l-2-15" stroke="#a17f76" stroke-width="2"/>
          <path d="M50 49c-1-6 5-10 11-8 10-10 21-10 39-6v14z" fill="#d9a98c"/><path d="M60 20c4 2 3-3 8-2s6 4 10 4c5 1 5 7 4 12 4 2 12 5 18 10-9 1-22-3-32-6-10-3-14-9-8-18z" fill="#f0b58c"/><path d="M68 22c5-1 7 6 5 13-5 1-8-6-5-13z" fill="#b97152"/><path d="M80 26c4 2 7 6 8 10" fill="none" stroke="#a5694a" stroke-width="2"/>
          <path d="M60 37c9 3 22 4 33 12H64z" fill="#f3cfae"/><path d="M73 42l7 2-3 4zM91 44l8 0-2 5h-6z" fill="#5f9034"/></g>
        </svg>
      </div>
      <button class="view" aria-label="Vista de tareas">${icon(svg`<path d="M1 0v3.500h12V0M1 6.500h12v8H1zM1 20v-3h12v3M18.500 0v5M18.500 10v10" fill="none" stroke="#eee" stroke-width="1.400"/><path d="M17 6h3v3h-3z" fill="#fff"/>`, 20, 20)}</button>
      ${apps.map((a) => html`<button class=${classMap({ app: true, running: !!a.running, stacked: !!a.stacked, current: !!a.current })} aria-label=${a.name}>${icon(a.body, 30, 32)}</button>`)}
      <div class="tray">
        <button class="weather">${icon(svg`<path d="M3.500 4a4 4 0 0 1 8 0v15a7 7 0 1 1-8 0z" fill="#d5e4f5"/><circle cx="7.500" cy="24" r="4.200" fill="#e02f47"/><path d="M7.500 10v13" stroke="#e02f47" stroke-width="2.600"/><circle cx="22" cy="12" r="6.200" fill="#e2536c"/><path d="M22 9v6M19 12h6" stroke="#fff" stroke-width="1.600"/>`, 28, 30)}<span>Subida de tempe.</span></button>
        <button class="small" aria-label="Mostrar iconos ocultos">${icon(svg`<path d="M1 12l7.500-8 7.500 8" fill="none" stroke="#fff" stroke-width="1.600"/>`, 17, 17)}</button>
        <button class="small" aria-label="Cámara">${icon(svg`<path d="M3 5h8v8H3zM11 8l3-2v6l-3-2M2 3c3-3 8-3 11 0M2 15c3 3 8 3 11 0" fill="none" stroke="#fff" stroke-width="1.300"/>`, 17, 18)}</button>
        <button class="small" aria-label="Actualizaciones">${icon(svg`<path d="M1 4l17-3v14H1zM6 9c1-4 6-4 7-1M13 5v3h-3M6 12c3 1 5 0 6-2" fill="none" stroke="#fff" stroke-width="1.400"/><circle cx="15" cy="15.500" r="4.500" fill="#fb9a16"/>`, 20, 20)}</button>
        <button class="small" aria-label="Batería">${icon(svg`<path d="M6 5h13v10H6z" fill="none" stroke="#fff" stroke-width="1.400"/><path d="M8 7h9v6H8zM19 8h2v4h-2zM0 4h6v4H4v5H2V8H0zM1 1h1v3H1zM4 1h1v3H4z" fill="#fff"/>`, 20, 21)}</button>
        <button class="small" aria-label="Volumen">${icon(svg`<path d="M1 7h3l4-4v13l-4-4H1zM10.500 7c1.500 1.500 1.500 4 0 5.500M13.500 5c2.500 2.500 2.500 7 0 9.500" fill="none" stroke="#fff" stroke-width="1.300"/><path d="M16.500 3c4 4 4 9.500 0 13.500" fill="none" stroke="#7f8b90" stroke-width="1.300"/>`, 20, 20)}</button>
        <button class="small" aria-label="Dropbox">${icon(svg`<path d="M5 1l4 2.500L5 6 1 3.500zM14 1l4 2.500L14 6l-4-2.500zM14 7l4 2.500-4 2.500-4-2.500z" fill="#fff"/><rect x="0" y="6" width="10" height="12" rx="2" fill="#d9142f"/><text x="5" y="16" text-anchor="middle" font-family="Roboto, sans-serif" font-weight="700" font-size="10" fill="#fff">2</text>`, 19, 19)}</button>
        <button class="lang">ESP</button>
        <button class="clock"><span>13:51</span><span>14/11/2022</span></button>
        <button class="notes" aria-label="Notificaciones">${icon(svg`<path d="M0 2h20v16h-9l-5 4v-4H0z" fill="#fff"/><path d="M3.500 6.500h13M3.500 10h13M3.500 13.500h8" stroke="#23323a" stroke-width="1.300"/><circle cx="20" cy="20" r="10" fill="#26333a" stroke="#7a868c"/><text x="20" y="25.500" text-anchor="middle" font-family="Open Sans, sans-serif" font-size="15" fill="#fff">1</text>`, 22, 22)}</button>
        <span class="peek"></span>
      </div>
    </footer>`;
  }
}

@customElement("app-root")
class AppRoot extends LitElement {
  static styles = css`
    :host { display: flex; flex-direction: column; height: 100vh; overflow: hidden; }
    .viewer { flex: 1; min-height: 0; display: flex; background: #525659; }
    .thumbs { width: 375px; flex: none; }
    .canvas { flex: 1; min-width: 0; overflow: hidden; display: flex; justify-content: center; align-items: flex-start; padding-right: 2px; }
    .report { flex: none; }
  `;
  render() {
    return html`<browser-tabs></browser-tabs>
      <address-bar></address-bar>
      <pdf-toolbar></pdf-toolbar>
      <main class="viewer">
        <page-thumbnails class="thumbs"></page-thumbnails>
        <div class="canvas"><emissions-report class="report"></emissions-report></div>
        <scroll-rail></scroll-rail>
      </main>
      <task-bar></task-bar>`;
  }
}
